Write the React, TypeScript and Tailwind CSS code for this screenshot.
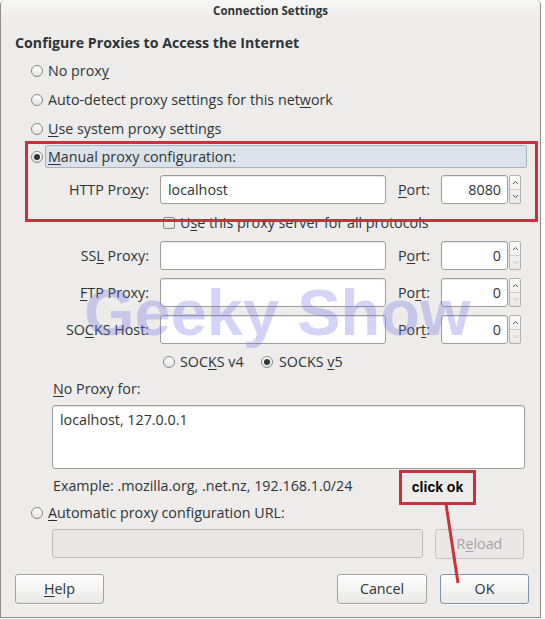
import React from "react";

const Radio = ({ checked = false }: { checked?: boolean }) => (
  <span className="w-[12px] h-[12px] rounded-full border border-[#878787] bg-linear-to-b from-white to-[#e2e2e2] flex items-center justify-center shrink-0">
    {checked && <span className="w-[6px] h-[6px] rounded-full bg-[#2e3436]" />}
  </span>
);

const U = ({ children }: { children: React.ReactNode }) => <span className="underline underline-offset-2">{children}</span>;

const Input = ({ w, value, disabled = false }: { w: string; value?: string; disabled?: boolean }) => (
  <div
    className={`${w} h-[29px] rounded-[3px] border flex items-center px-[7px] ${
      disabled ? "border-[#bdbbb9] bg-[#e8e7e6]" : "border-[#9f9d9b] bg-white shadow-[inset_0_1px_1px_rgba(0,0,0,0.1)]"
    }`}
  >
    {value}
  </div>
);

const Chevron = ({ up, dim }: { up: boolean; dim: boolean }) => (
  <svg width="7" height="5" viewBox="0 0 7 5">
    <path
      d={up ? "M1 4 L3.5 1.5 L6 4" : "M1 1 L3.5 3.5 L6 1"}
      fill="none"
      stroke={dim ? "#c4c4c4" : "#555"}
      strokeWidth="1"
    />
  </svg>
);

const Spin = ({ value, downDim }: { value: string; downDim: boolean }) => (
  <div className="flex h-[29px] w-[80px]">
    <div className="w-[67px] h-[29px] rounded-[3px] border border-[#9f9d9b] bg-white shadow-[inset_0_1px_1px_rgba(0,0,0,0.1)] flex items-center justify-end pr-[6px]">
      {value}
    </div>
    <div className="ml-[1px] w-[12px] h-[29px] rounded-[2px] border border-[#b3b1af] bg-linear-to-b from-[#fafafa] to-[#e9e9e8] flex flex-col">
      <div className="flex-1 flex items-center justify-center border-b border-[#cfcdcb]">
        <Chevron up dim={false} />
      </div>
      <div className="flex-1 flex items-center justify-center">
        <Chevron up={false} dim={downDim} />
      </div>
    </div>
  </div>
);

const ProxyRow = ({
  label,
  port,
  value,
  portVal,
  downDim,
  mt,
}: {
  label: React.ReactNode;
  port: React.ReactNode;
  value?: string;
  portVal: string;
  downDim: boolean;
  mt: string;
}) => (
  <div className={`${mt} h-[29px] flex items-center`}>
    <div className="w-[148px] text-right whitespace-nowrap">{label}</div>
    <div className="ml-[11px]">
      <Input w="w-[226px]" value={value} />
    </div>
    <div className="ml-[12px] w-[43px] whitespace-nowrap">{port}</div>
    <Spin value={portVal} downDim={downDim} />
  </div>
);

const Button = ({
  w,
  children,
  ml,
  disabled = false,
  focus = false,
}: {
  w: string;
  children: React.ReactNode;
  ml: string;
  disabled?: boolean;
  focus?: boolean;
}) => (
  <div
    className={`${w} ${ml} h-[30px] rounded-[3px] border flex items-center justify-center ${
      disabled
        ? "border-[#c6c4c2] bg-[#e9e8e7] text-[#a3a3a3]"
        : focus
        ? "border-[#7c93ad] bg-linear-to-b from-white to-[#e8e8e7] shadow-[0_1px_0_rgba(255,255,255,0.8)]"
        : "border-[#a3a19f] bg-linear-to-b from-white to-[#e8e8e7] shadow-[0_1px_0_rgba(255,255,255,0.8)]"
    }`}
  >
    {children}
  </div>
);

export default function App() {
  return (
    <div className="relative w-[545px] h-[619px] bg-white overflow-hidden font-['Open_Sans',sans-serif] text-[14.3px] text-[#2e3436]">
      <div className="w-[541px] h-[618px] bg-[#edeceb] border-l border-r border-b border-[#8e8e8e] rounded-t-[5px] flex flex-col">
        <div className="h-[21px] rounded-t-[5px] bg-linear-to-b from-[#f7f7f6] to-[#edeceb] flex items-center justify-center text-[11.5px] font-bold">
          Connection Settings
        </div>

        <div className="mt-[12px] h-[20px] pl-[14px] flex items-center text-[14.2px] font-bold whitespace-nowrap">
          Configure Proxies to Access the Internet
        </div>

        <div className="mt-[3px] h-[29px] flex items-center pl-[30px] gap-[5px]">
          <Radio />
          <span>
            No prox<U>y</U>
          </span>
        </div>
        <div className="h-[29px] flex items-center pl-[30px] gap-[5px]">
          <Radio />
          <span>
            Auto-detect proxy settings for this net<U>w</U>ork
          </span>
        </div>
        <div className="h-[29px] flex items-center pl-[30px] gap-[5px]">
          <Radio />
          <span>
            <U>U</U>se system proxy settings
          </span>
        </div>

        <div className="mt-[2px] h-[23px] flex items-center pl-[30px]">
          <Radio checked />
          <div className="ml-[2px] w-[482px] h-[23px] bg-[#dce2ea] border border-[#a7b2c0] rounded-[2px] pl-[2px] flex items-center">
            <span>
              <U>M</U>anual proxy configuration:
            </span>
          </div>
        </div>

        <ProxyRow
          mt="mt-[7px]"
          label={
            <>
              HTTP Pro<U>x</U>y:
            </>
          }
          value="localhost"
          port={
            <>
              <U>P</U>ort:
            </>
          }
          portVal="8080"
          downDim={false}
        />

        <div className="h-[37px] flex items-center pl-[162px] gap-[5px]">
          <span className="w-[12px] h-[12px] rounded-[2px] border border-[#878787] bg-linear-to-b from-white to-[#e4e4e4] shrink-0" />
          <span>
            U<U>s</U>e this proxy server for all protocols
          </span>
        </div>

        <ProxyRow
          mt="mt-0"
          label={
            <>
              SS<U>L</U> Proxy:
            </>
          }
          port={
            <>
              P<U>o</U>rt:
            </>
          }
          portVal="0"
          downDim
        />
        <ProxyRow
          mt="mt-[8px]"
          label={
            <>
              <U>F</U>TP Proxy:
            </>
          }
          port={
            <>
              Po<U>r</U>t:
            </>
          }
          portVal="0"
          downDim
        />
        <ProxyRow
          mt="mt-[8px]"
          label={
            <>
              SO<U>C</U>KS Host:
            </>
          }
          port={
            <>
              Por<U>t</U>:
            </>
          }
          portVal="0"
          downDim
        />

        <div className="h-[36px] flex items-center pl-[162px]">
          <div className="w-[98px] flex items-center gap-[5px]">
            <Radio />
            <span>
              SOC<U>K</U>S v4
            </span>
          </div>
          <div className="flex items-center gap-[6px]">
            <Radio checked />
            <span>
              SOCKS <U>v</U>5
            </span>
          </div>
        </div>

        <div className="h-[18px] pl-[52px] flex items-center">
          <span>
            <U>N</U>o Proxy for:
          </span>
        </div>

        <div className="mt-[7px] ml-[51px] w-[473px] h-[64px] rounded-[3px] border border-[#9f9d9b] bg-white shadow-[inset_0_1px_1px_rgba(0,0,0,0.1)] pt-[6px] pl-[7px] leading-[16px]">
          localhost, 127.0.0.1
        </div>

        <div className="mt-[7px] h-[20px] pl-[52px] flex items-center whitespace-nowrap">
          Example: .mozilla.org, .net.nz, 192.168.1.0/24
        </div>

        <div className="mt-[7px] h-[20px] flex items-center pl-[30px] gap-[5px]">
          <Radio />
          <span>
            <U>A</U>utomatic proxy configuration URL:
          </span>
        </div>

        <div className="mt-[6px] h-[29px] flex items-center pl-[51px]">
          <Input w="w-[371px]" disabled />
          <Button w="w-[89px]" ml="ml-[12px]" disabled>
            <span>
              R<U>e</U>load
            </span>
          </Button>
        </div>

        <div className="mt-[16px] h-[30px] flex items-center pl-[14px]">
          <Button w="w-[89px]" ml="ml-0">
            <span>
              <U>H</U>elp
            </span>
          </Button>
          <Button w="w-[90px]" ml="ml-[233px]">
            Cancel
          </Button>
          <Button w="w-[89px]" ml="ml-[13px]" focus>
            OK
          </Button>
        </div>
      </div>

      {/* watermark */}
      <div className="absolute left-[84px] top-[280px] text-[65px] leading-none font-bold font-['Liberation_Sans',Arial,sans-serif] text-[rgba(110,110,230,0.3)] whitespace-nowrap pointer-events-none">
        Geeky Show
      </div>

      {/* red annotation box */}
      <div className="absolute left-[25px] top-[141px] w-[513px] h-[81px] border-[3px] border-[#c9323c] pointer-events-none" />

      {/* click ok callout */}
      <div className="absolute left-[399px] top-[470px] w-[77px] h-[35px] border-[3px] border-[#c9323c] bg-[#edeceb] flex items-center justify-center font-['Liberation_Sans',Arial,sans-serif] font-bold text-[14px] text-black">
        click ok
      </div>
      <svg className="absolute left-0 top-0 pointer-events-none" width="545" height="619">
        <line x1="446" y1="504" x2="458" y2="583" stroke="#c9323c" strokeWidth="3" />
      </svg>
    </div>
  );
}
